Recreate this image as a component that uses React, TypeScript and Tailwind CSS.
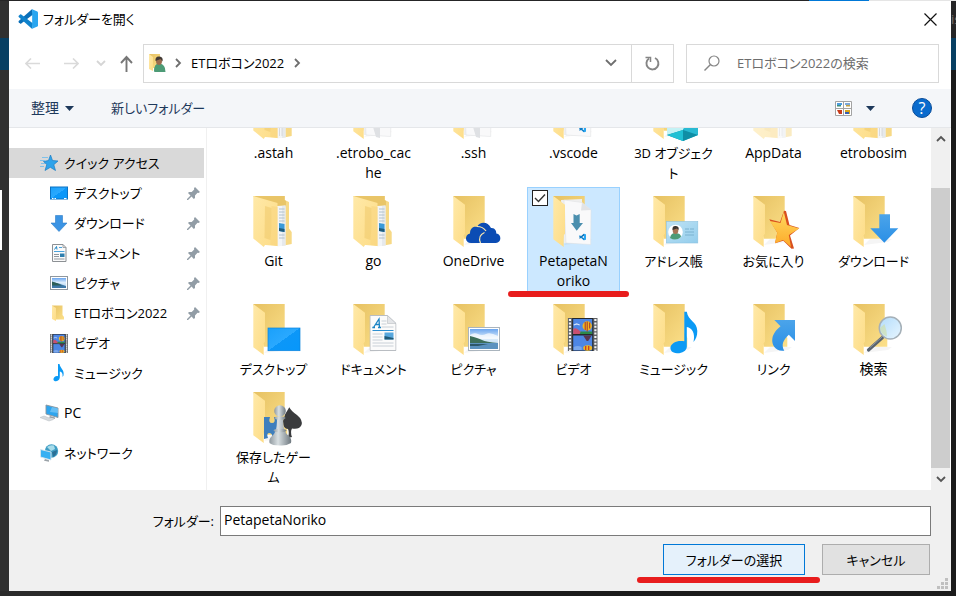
import { useState } from "react";
import type { ReactNode } from "react";

/* ---------- folder artwork (all drawn in a 55 x 56 box) ---------- */

function Gradients() {
  return (
    <svg className="absolute size-0" aria-hidden="true">
      <defs>
        <linearGradient id="back" x1="0" y1="0" x2="1" y2="1">
          <stop offset="0" stopColor="#e6c162" />
          <stop offset="1" stopColor="#fce08a" />
        </linearGradient>
        <linearGradient id="flap" x1="0" y1="0" x2="1" y2="1">
          <stop offset="0" stopColor="#ffe9a8" />
          <stop offset="1" stopColor="#fddc86" />
        </linearGradient>
        <linearGradient id="blue" x1="0" y1="0" x2="0" y2="1">
          <stop offset="0" stopColor="#4ba4ea" />
          <stop offset="1" stopColor="#2a8fe6" />
        </linearGradient>
        <linearGradient id="screen" x1="0" y1="0" x2="1" y2="1">
          <stop offset="0" stopColor="#1aa0fa" />
          <stop offset="0.5" stopColor="#2aa9ff" />
          <stop offset="0.5" stopColor="#0c97f8" />
          <stop offset="1" stopColor="#0797fb" />
        </linearGradient>
        <linearGradient id="star" x1="0" y1="0" x2="0" y2="1">
          <stop offset="0" stopColor="#ffd95f" />
          <stop offset="1" stopColor="#fda928" />
        </linearGradient>
        <linearGradient id="pawn" x1="0" y1="0" x2="1" y2="0">
          <stop offset="0" stopColor="#8f989e" />
          <stop offset="0.4" stopColor="#d9e0e3" />
          <stop offset="1" stopColor="#6e787f" />
        </linearGradient>
        <linearGradient id="sky" x1="0" y1="0" x2="0" y2="1">
          <stop offset="0" stopColor="#6aa5ef" />
          <stop offset="0.45" stopColor="#dcedfb" />
          <stop offset="1" stopColor="#b5d4ef" />
        </linearGradient>
        <linearGradient id="lens" x1="0" y1="0" x2="1" y2="1">
          <stop offset="0" stopColor="#b2dcfb" />
          <stop offset="1" stopColor="#e8f6ff" />
        </linearGradient>
        <linearGradient id="card" x1="0" y1="0" x2="1" y2="1">
          <stop offset="0" stopColor="#bfe3f5" />
          <stop offset="1" stopColor="#93cdec" />
        </linearGradient>
      </defs>
    </svg>
  );
}

const BackPanel = () => (
  <>
    <path d="M18 50 L24 44 H46 L42 47 Z" fill="#000" opacity="0.04" />
    <path d="M7.3 1 H38.7 V30 L41.3 35 V43.7 H17.7 Z" fill="url(#back)" />
  </>
);
const Flap = () => (
  <path d="M7.3 1 L19 9.7 V38.7 L17.7 40.3 V52 L7.3 44.3 Z" fill="url(#flap)" />
);

const FullFolder = ({ photo = true }: { photo?: boolean }) => (
  <>
    <path d="M7.3 1 H38.7 V5 L43 7 V33.5 L45.7 37 V49 L38 50.5 H30 Z" fill="#f7d986" />
    <path d="M7.3 1 H38.7 V5 L40 6 V12 H31 Z" fill="#e9c568" />
    <path d="M31 11 L39.5 10.5 V50.5 L31 51.5 Z" fill="#f3f5f7" />
    <path d="M36 11 L39.5 10.500 V50.500 L36 51 Z" fill="#e6e9ec" />
    {photo && (
      <>
        <path d="M33 14h5.500M33 17h5.500M33 20h5.500M33 23h5.500M33 26h5.500M33 40h5.500M33 43h5.500" stroke="#a9bccb" strokeWidth="0.900" />
        <path d="M33 28 L38.500 29 V37 L33 36 Z" fill="#3a9ad9" />
        <path d="M33 33 L38.500 34 V37 L33 36 Z" fill="#1e5b7c" />
      </>
    )}
    {!photo && <path d="M33.500 41v8M36 41v8" stroke="#d0d2d5" strokeWidth="0.800" />}
    <path d="M7.3 1 L31.5 8 V51 L19 50 L17.700 52 L7.300 43.500 Z" fill="url(#flap)" />
    <path d="M19 11 L25.500 13 V32 L24.500 45 L18.500 43 Z" fill="#f0cb70" opacity="0.600" />
    <path d="M25.500 11 L31.500 12 V51 L24.500 50 V34 Z" fill="#f8d680" opacity="0.600" />
  </>
);

const Photo = ({ x, y, w, h }: { x: number; y: number; w: number; h: number }) => (
  <svg x={x} y={y} width={w} height={h} viewBox="0 0 32 24" preserveAspectRatio="none">
    <rect x="0.5" y="0.5" width="31" height="23" fill="#fff" stroke="#aab4bd" />
    <rect x="2" y="2" width="28" height="20" fill="url(#sky)" />
    <path d="M2 8 q4 -3 8 -1 t8 0 t12 2 v3 H2 Z" fill="#fff" opacity="0.7" />
    <path d="M2 9 Q10 11 14 13 T30 16 V18 H2 Z" fill="#3d6f5a" />
    <path d="M2 16 H30 V22 H2 Z" fill="#5b92bf" />
    <path d="M2 17 H20 L10 19 H2 Z" fill="#2d586a" />
  </svg>
);

const Film = ({ x, y, w, h }: { x: number; y: number; w: number; h: number }) => (
  <svg x={x} y={y} width={w} height={h} viewBox="0 0 30 33" preserveAspectRatio="none">
    <rect width="30" height="33" fill="#5d6064" />
    <path d="M2.3 1V33M27.700 1V33" stroke="#f5f5f5" strokeWidth="2.200" strokeDasharray="2 1.400" />
    <rect x="4.500" width="21" height="33" fill="#26282b" />
    <rect x="5.5" y="1" width="19" height="15" fill="#4d86e4" />
    <rect x="5.5" y="17.5" width="19" height="15" fill="#4d86e4" />
    <path d="M5.5 11 Q8 9 11 12 T16 14 V16 H5.5 Z" fill="#c8506f" />
    <path d="M13 13.500 H24.5 V16 H12 Z" fill="#2d8a49" />
    <ellipse cx="19.500" cy="8" rx="4.700" ry="4.700" fill="#f2b71e" />
    <path d="M17.500 4v8M19.500 3.500v10M22 4.500v6" stroke="#a3322c" strokeWidth="1" />
    <path d="M15.500 17.5 H24 L20.5 23 H19 Z" fill="#5a3550" />
    <ellipse cx="20" cy="30" rx="4.500" ry="2.800" fill="#f2b71e" />
    <path d="M18 28v4M21 28v4" stroke="#c3322c" strokeWidth="1.200" />
    <path d="M6 29 q4 -2 8 0 v3 h-8 Z" fill="#7aa7ea" />
    <path d="M6 7l3 -1 3 1" stroke="#d7e6fb" strokeWidth="1.200" fill="none" />
  </svg>
);

const Page = ({ x, y, w, h }: { x: number; y: number; w: number; h: number }) => (
  <svg x={x} y={y} width={w} height={h} viewBox="0 0 27 36" preserveAspectRatio="none">
    <path d="M0.5 0.5 H18 L26.5 8.5 V35.5 H0.5 Z" fill="#fbfbfb" stroke="#b9bdc2" />
    <path d="M18 0.5 V8.5 H26.5 Z" fill="#e3e5e8" stroke="#b9bdc2" strokeWidth="0.6" />
    <path d="M4 12.5 L9.5 4 L10 12.5 M6 9.5 H10 M2.8 12.5 H5.5 M8.5 12.5 H11.5" stroke="#1c84c4" strokeWidth="1.3" fill="none" />
    <path d="M3 15.5 H24" stroke="#2d8fd0" strokeWidth="1.2" />
    <path d="M12 6h5M12 9h5M12 12h12M3 19h10M3 22h10M3 25h10M3 28h21M3 31h21" stroke="#c3cbd2" strokeWidth="0.9" />
    <rect x="15" y="17.5" width="9" height="7" fill="#58a7dd" />
    <path d="M15 21 L24 23 V24.5 H15 Z" fill="#1f5a78" />
  </svg>
);

const Person = () => (
  <>
    <circle cx="29.5" cy="37" r="7.3" fill="#fff" />
    <path d="M24 43 Q25 37.5 30 38 Q35 38.5 35 42 Q30 46.500 24 43Z" fill="#4d9b76" />
    <ellipse cx="29.500" cy="35.500" rx="2.800" ry="3.500" fill="#a87555" />
    <path d="M26.500 35 Q26 30.500 30 31 Q33.500 31.500 32.500 35 L31 33.500 Z" fill="#3b342f" />
  </>
);

const Code = ({ x, y, s }: { x: number; y: number; s: number }) => (
  <svg x={x} y={y} width={s} height={s} viewBox="0 0 24 24">
    <path d="M17 0 L0.800 14.500 Q0.300 15.200 0.900 15.900 L2.500 17.400 Q3.200 17.900 3.900 17.400 L18 6.500 Z" fill="#0a6fb8" />
    <path d="M17 24 L0.800 9.500 Q0.300 8.800 0.900 8.100 L2.500 6.600 Q3.200 6.100 3.900 6.600 L18 17.500 Z" fill="#0f82cc" />
    <path d="M17 0.200 L23.200 2.900 Q24 3.300 24 4.200 V19.800 Q24 20.700 23.200 21.100 L17 23.800 Z" fill="#2aa6f0" />
  </svg>
);

const Papers = ({ code = false, arrow = false }: { code?: boolean; arrow?: boolean }) => (
  <>
    <BackPanel />
    <path d="M15 5 L36 4 V48 H18 Z" fill="#efefef" />
    <path d="M18 5 L36 7.500 L45 15 L44.700 49.500 L20 48 Z" fill="#f9f9fa" stroke="#dcdee1" strokeWidth="0.500" />
    <path d="M36 7.500 L35 15.500 L45 15 Z" fill="#e1e3e6" />
    {!code && <path d="M27 40 L30 50 L34 51 V38 Z" fill="#dfe1e4" />}
    {arrow && <path d="M27.500 19 l3 1.500 3.200 -1.500 V28 H37 L30.700 35.800 L25 28 H27.500 Z" fill="#4b8fae" />}
    {code && <Code x={33} y={38.500} s={7} />}
    <Flap />
  </>
);

const NOTE = "M38.300 8.700 H40.800 C42 18 51 18 51.300 28 C51.300 33 50 36 47.500 39 C49.500 30 46 25 40.800 24 V44 C40.500 48 36 50.500 31 50.300 C26 50 24 47 24.500 44 C25.500 40 31 37 38.300 38.300 Z";

const art: Record<string, ReactNode> = {
  full: <FullFolder />,
  plain: <FullFolder photo={false} />,
  papers: <Papers />,
  code: <Papers code />,
  selected: <Papers code arrow />,
  cube: (
    <>
      <BackPanel />
      <Flap />
      <path d="M21 30 L37 24 L52 30 V48 L37 54 L21 48 Z" fill="#c4f2f5" />
      <path d="M37 42 L52 30 V48 L37 54 Z" fill="#28b9d2" />
      <path d="M21 48 L37 43 L52 48 L37 54 Z" fill="#0f8ea5" />
      <path d="M21 48 L37 43 V54 Z" fill="#20c0d4" />
    </>
  ),
  cloud: (
    <>
      <BackPanel />
      <Flap />
      <path d="M25 48 C19 48 18 40 24 38.500 C24 32 29 31 31 32 C34 26 42 26.500 45 33 C49 32.500 50.500 36 50.300 38.500 C56 39 55.500 48 50 48 Z" fill="#0b4cb4" />
      <path d="M31 31.500 Q37 31.500 40 36 M34.500 48 Q31.500 40.500 38.500 37.500" fill="none" stroke="#fbe7ae" strokeWidth="1.200" />
    </>
  ),
  contact: (
    <>
      <BackPanel />
      <Flap />
      <rect x="20.300" y="26.500" width="31.500" height="21.500" fill="url(#card)" stroke="#8dc2df" strokeWidth="0.600" />
      <Person />
      <path d="M39 34h4M44 34h4M39 37h9M39 40h9" stroke="#7bb2d0" strokeWidth="1" />
    </>
  ),
  star: (
    <>
      <BackPanel />
      <Flap />
      <path d="M38 15.700 L40 16 L43.500 30 L53.300 33 L44 40.500 L48 53.500 L45.500 53.700 L37.300 45.700 L29 48.300 L31.300 37.700 L23.300 24.300 L34 27 Z" fill="#d8501f" />
      <path d="M37.800 17 L41 30 L53.300 33.500 L42.800 40 L45 52 L37 45 L29 48.300 L31.300 37.700 L23.800 26 L34.500 28 Z" fill="url(#star)" />
    </>
  ),
  download: (
    <>
      <BackPanel />
      <Flap />
      <path d="M33.300 19.300 H44 V33.300 H52.300 L38.300 47.700 L24.300 33.300 H33.300 Z" fill="url(#blue)" />
    </>
  ),
  desktop: (
    <>
      <BackPanel />
      <Flap />
      <rect x="22" y="25" width="32" height="22.700" fill="url(#screen)" stroke="#0a83dd" strokeWidth="0.700" />
    </>
  ),
  document: (
    <>
      <BackPanel />
      <Flap />
      <Page x={23.500} y={12} w={27} h={36} />
    </>
  ),
  picture: (
    <>
      <BackPanel />
      <Flap />
      <Photo x={22} y={24} w={32} h={24} />
    </>
  ),
  video: (
    <>
      <BackPanel />
      <Flap />
      <Film x={21.700} y={15} w={30} h={33} />
    </>
  ),
  music: (
    <>
      <BackPanel />
      <Flap />
      <path d={NOTE} fill="#0b9af5" />
    </>
  ),
  link: (
    <>
      <BackPanel />
      <Flap />
      <path d="M28.300 17 H49 V38 L42.800 31.700 C37 37 35 42 38.300 47.700 C30 49 25.500 42 26.300 36 C27 30 31 26.500 34.500 23.300 Z" fill="url(#blue)" />
    </>
  ),
  search: (
    <>
      <BackPanel />
      <Flap />
      <path d="M36.500 34.500 L22.500 47" stroke="#59636e" strokeWidth="3.200" strokeLinecap="round" />
      <path d="M36 34 L24 44.500" stroke="#9aa5af" strokeWidth="0.800" />
      <circle cx="44.300" cy="25" r="11" fill="url(#lens)" stroke="#a5b0b8" strokeWidth="1.500" />
      <path d="M34 25 A10 10 0 0 0 41 33.500 Q41 28 38.500 21 Z" fill="#cfdfae" opacity="0.700" />
    </>
  ),
  games: (
    <>
      <BackPanel />
      <Flap />
      <path d="M18 26 H24 Q22 32 26 32 Q30 32 28 26 H34 V48 H26 Q27 42 23.500 42 Q20 42 22 47 L18 48 Z" fill="#3f7fbd" />
      <path d="M43.300 16.300 Q45 20 51 24 Q57 29 55.500 34 Q53 39 46 37.500 Q44 41 46 46 L42 47 Q43.500 41 42 38 Q37 38 37 30 Q39 22 43.300 16.300 Z" fill="#3a3b3d" />
      <path d="M31 27 H37 Q37 36 39 40 Q40 43 43 45 Q46 48 45 52 Q40 55 34 54.500 Q26 54.500 23.500 52 Q22.500 48 26 45 Q28.500 43 29.500 40 Q31 36 31 27 Z" fill="url(#pawn)" />
      <ellipse cx="34" cy="27" rx="5.500" ry="1.800" fill="url(#pawn)" />
      <ellipse cx="34" cy="39.500" rx="6.500" ry="1.800" fill="url(#pawn)" />
      <circle cx="34" cy="20" r="5.800" fill="url(#pawn)" />
    </>
  ),
};

/* ---------- data ---------- */

type Entry = { lines: string[]; icon: string; faded?: boolean };

const rows: Entry[][] = [
  [
    { lines: [".astah"], icon: "plain" },
    { lines: [".etrobo_cac", "he"], icon: "papers" },
    { lines: [".ssh"], icon: "papers" },
    { lines: [".vscode"], icon: "code" },
    { lines: ["3D オブジェク", "ト"], icon: "cube" },
    { lines: ["AppData"], icon: "plain", faded: true },
    { lines: ["etrobosim"], icon: "plain" },
  ],
  [
    { lines: ["Git"], icon: "full" },
    { lines: ["go"], icon: "full" },
    { lines: ["OneDrive"], icon: "cloud" },
    { lines: ["PetapetaN", "oriko"], icon: "selected" },
    { lines: ["アドレス帳"], icon: "contact" },
    { lines: ["お気に入り"], icon: "star" },
    { lines: ["ダウンロード"], icon: "download" },
  ],
  [
    { lines: ["デスクトップ"], icon: "desktop" },
    { lines: ["ドキュメント"], icon: "document" },
    { lines: ["ピクチャ"], icon: "picture" },
    { lines: ["ビデオ"], icon: "video" },
    { lines: ["ミュージック"], icon: "music" },
    { lines: ["リンク"], icon: "link" },
    { lines: ["検索"], icon: "search" },
  ],
  [{ lines: ["保存したゲー", "ム"], icon: "games" }],
];

/* Kana set a size smaller than Latin or kanji-only names, for an even colour. */
const hasKana = (text: string) => /[\u3040-\u30ff]/.test(text);

const sideArt: Record<string, ReactNode> = {
  quick: (
    <>
      <path d="M10.500 1 L12.500 6.500 L18 7 L13.800 10.700 L15.500 16.500 L10.300 13.300 L5 16.500 L6.800 10.500 L3.500 7.500 L8.500 6.500 Z" fill="#2ea3ea" stroke="#1a7dc4" strokeWidth="0.700" />
      <path d="M2 3.500h6M0 6.500h5M1 9.500h4M0 12.500h4" stroke="#7fc1ea" strokeWidth="1" />
    </>
  ),
  desktop: (
    <>
      <rect x="0.500" y="3" width="17" height="12" fill="url(#screen)" stroke="#0a72c4" />
      <path d="M2 14.500h1.500M4.500 14.500h1.500M14 14.500h2.500" stroke="#fff" />
    </>
  ),
  download: <path d="M5.500 1.500 H12.500 V9 H17 L9 17.500 L1 9 H5.500 Z" fill="#3b94e4" stroke="#2b7cc8" strokeWidth="0.600" />,
  document: (
    <>
      <path d="M2.500 0.500 H13 L16 3.500 V17.500 H2.500 Z" fill="#fafafa" stroke="#8c9094" />
      <path d="M13 0.500 V3.500 H16" fill="none" stroke="#8c9094" strokeWidth="0.800" />
      <path d="M4.500 5.500 L6.500 2.500 L7 5.500" fill="none" stroke="#1c84c4" />
      <path d="M9 3.500h3M4 7.500h10.500" stroke="#4aa3dc" />
      <path d="M4 10.500h5M4 12.500h5M4 15h10.500" stroke="#8f979e" />
      <path d="M10 9.500h4.500v3.500h-4.500z" fill="#2f7fae" />
    </>
  ),
  picture: (
    <>
      <rect x="0.500" y="2.500" width="17" height="13" fill="#fff" stroke="#8f979e" />
      <rect x="2" y="4" width="14" height="10" fill="url(#sky)" />
      <path d="M2 8 Q8 9 16 12 V14 H2 Z" fill="#3f79a8" />
      <path d="M2 7.500 Q8 9 12 11.500 H2 Z" fill="#2d5f57" />
    </>
  ),
  folder: (
    <>
      <path d="M2 1.500 H12.500 V11 L14 13 V15.500 H6 Z" fill="url(#back)" />
      <path d="M2 1.500 L6 4 V17 L2 15 Z" fill="url(#flap)" />
    </>
  ),
  video: <Film x={0} y={0} w={18} h={19} />,
  music: <path d="M8 0 H9.500 C10.500 5 14.500 5.500 13.500 11.500 L12.500 13 C13 9.500 12 8 9.800 7.500 V13.500 C9.500 16.500 7 17.500 5 17.200 C3 16.800 3 14.500 4.500 13 C5.500 12 7 11.900 8 12.200 Z" fill="#0b9af5" />,
  pc: (
    <>
      <path d="M6 1 L18 4 V13.500 L6 10 Z" fill="#2fa5ee" stroke="#8a949c" strokeWidth="0.900" />
      <path d="M12 3 L18 4.500 V9 L10 8 Z" fill="#7dcaf8" opacity="0.700" />
      <path d="M10 12 l5 1.500 v1.500 l-6 -1.500 Z" fill="#9aa2a8" />
      <path d="M0 13.500 L4 12 L13.500 15.500 L9 17 Z" fill="#d6dadd" stroke="#b7bdc2" strokeWidth="0.500" />
    </>
  ),
  network: (
    <>
      <circle cx="11.500" cy="7" r="6.700" fill="#3f9dc4" />
      <path d="M7 3 Q10 0.500 14 1.500 L15 5 L11 7 Z" fill="#a8dcea" />
      <path d="M12 8 L17 6 Q17 11 13 13 Z" fill="#2a6f96" />
      <path d="M0.500 5.500 L11 8 V16 L0.500 13 Z" fill="#38b0f2" stroke="#dbe6ec" strokeWidth="0.900" />
      <path d="M5 15 l4 1.200 v1.500 l-5 -1 Z" fill="#9aa2a8" />
    </>
  ),
};

type Place = { label: string; icon: string; pinned?: boolean };

const places: Place[] = [
  { label: "デスクトップ", icon: "desktop", pinned: true },
  { label: "ダウンロード", icon: "download", pinned: true },
  { label: "ドキュメント", icon: "document", pinned: true },
  { label: "ピクチャ", icon: "picture", pinned: true },
  { label: "ETロボコン2022", icon: "folder", pinned: true },
  { label: "ビデオ", icon: "video" },
  { label: "ミュージック", icon: "music" },
];

/* ---------- pieces ---------- */

const SideIcon = ({ name }: { name: string }) => (
  <svg width="18" height="19" viewBox="0 0 18 19" className="shrink-0 overflow-visible" aria-hidden="true">
    {sideArt[name]}
  </svg>
);

const Pin = () => (
  <svg width="13" height="13" viewBox="0 0 13 13" className="mr-1 ml-auto" aria-hidden="true">
    <path d="M8 0 L13 5 L11.500 6 L10.500 5.800 L8 8.500 L8 11 L6.800 12 L4.500 9.500 L1 13 H0 V12 L3.500 8.500 L1 6 L2 5 L4.700 5 L7.200 2.500 L7 1.200 Z" fill="#929da6" />
  </svg>
);

const Chevron = ({ dir, color = "#6e6e6e" }: { dir: "right" | "down" | "up"; color?: string }) => (
  <svg width="10" height="10" viewBox="0 0 10 10" aria-hidden="true">
    <path
      d={dir === "right" ? "M3 1 L7 5 L3 9" : dir === "down" ? "M1 3 L5 7 L9 3" : "M1 7 L5 3 L9 7"}
      fill="none"
      stroke={color}
      strokeWidth="1.800"
    />
  </svg>
);

const Caret = () => (
  <svg width="9" height="5" viewBox="0 0 9 5" aria-hidden="true">
    <path d="M0 0 H9 L4.500 5 Z" fill="#1e395b" />
  </svg>
);

function FileItem({ entry }: { entry: Entry }) {
  const isTarget = entry.icon === "selected";
  const [checked, setChecked] = useState(true);
  const name = entry.lines.join("");
  return (
    <li className={isTarget ? "relative border border-[#99d1ff] bg-[#cce8ff]" : "border border-transparent"}>
      <button type="button" aria-label={name} className="flex w-full flex-col items-center pt-[7px]">
        <svg
          width="55"
          height="56"
          viewBox="0 0 55 56"
          aria-hidden="true"
          className={entry.faded ? "overflow-visible opacity-50" : "overflow-visible"}
        >
          {art[entry.icon]}
        </svg>
        {entry.lines.map((line) => (
          <span
            key={line}
            className={
              hasKana(line)
                ? "block text-[13px] leading-5 whitespace-nowrap"
                : "block text-[14px] leading-5 whitespace-nowrap"
            }
          >
            {line}
          </span>
        ))}
      </button>
      {isTarget && (
        <>
          <input
            type="checkbox"
            aria-label={name}
            checked={checked}
            onChange={() => setChecked(!checked)}
            className="absolute top-0.5 left-1 size-4 appearance-none border border-[#222] bg-white"
          />
          {checked && (
            <svg width="16" height="16" viewBox="0 0 16 16" className="pointer-events-none absolute top-0.5 left-1" aria-hidden="true">
              <path d="M3 8 L6.500 11.500 L13 4.500" fill="none" stroke="#333" strokeWidth="1.400" />
            </svg>
          )}
          <span className="absolute -bottom-1.5 -left-5 h-[6px] w-[121px] rounded-full bg-[#e81c1c]" />
        </>
      )}
    </li>
  );
}

export default function App() {
  const [folder, setFolder] = useState("PetapetaNoriko");
  const [query, setQuery] = useState("");

  return (
    <div
      lang="ja"
      className="flex h-screen flex-col overflow-hidden bg-[#1e1e1e] font-['Open_Sans','Noto_Sans_CJK_JP',sans-serif] text-[13px] leading-5 text-black [font-feature-settings:'palt']"
    >
      <Gradients />
      <div className="flex h-px shrink-0 justify-end bg-[#252526]">
        <div className="w-[60px] bg-[#0078d7]" />
        <div className="w-[87px] bg-[#e5e5e5]" />
      </div>

      <div className="flex min-h-0 flex-1">
        <div className="flex w-[9px] shrink-0 flex-col bg-[#303030]">
          <div className="mt-[37px] h-8 bg-[#073f63]" />
          <div className="mt-[120px] h-[60px] w-0.5 bg-white" />
        </div>

        <main className="flex min-w-0 flex-1 flex-col bg-white">
          <header className="flex h-9 shrink-0 items-center pr-[14px] pl-[9px]">
            <svg width="20" height="20" viewBox="0 0 20 20" aria-hidden="true">
              <Code x={0} y={0} s={20} />
            </svg>
            <h1 className="ml-[5px]">フォルダーを開く</h1>
            <button type="button" aria-label="閉じる" className="ml-auto">
              <svg width="13" height="13" viewBox="0 0 13 13" aria-hidden="true">
                <path d="M0.500 0.500 L12.500 12.500 M12.500 0.500 L0.500 12.500" stroke="#111" strokeWidth="1.200" />
              </svg>
            </button>
          </header>

          <nav className="flex h-[52px] shrink-0 items-center pr-3">
            <div className="flex w-[134px] shrink-0 items-center pl-4">
              <button type="button" aria-label="戻る">
                <svg width="15" height="11" viewBox="0 0 15 11" aria-hidden="true">
                  <path d="M15 5.500 H1 M6 0.500 L1 5.500 L6 10.500" fill="none" stroke="#dadada" strokeWidth="1.600" />
                </svg>
              </button>
              <button type="button" aria-label="進む" className="ml-6">
                <svg width="15" height="11" viewBox="0 0 15 11" aria-hidden="true">
                  <path d="M0 5.500 H14 M9 0.500 L14 5.500 L9 10.500" fill="none" stroke="#dadada" strokeWidth="1.600" />
                </svg>
              </button>
              <button type="button" aria-label="最近表示した場所" className="ml-[17px]">
                <Chevron dir="down" color="#d5d5d5" />
              </button>
              <button type="button" aria-label="上へ" className="ml-[14px]">
                <svg width="13" height="17" viewBox="0 0 13 17" aria-hidden="true">
                  <path d="M6.500 17 V2 M1 8 L6.500 2 L12 8" fill="none" stroke="#777" strokeWidth="1.900" />
                </svg>
              </button>
            </div>
            <div className="flex h-[39px] min-w-0 flex-1 border border-[#d9d9d9]">
              <div className="flex min-w-0 flex-1 items-center pr-[14px] pl-[5px]">
                <svg width="17" height="18" viewBox="0 0 17 18" aria-hidden="true">
                  <path d="M0 0 H11 V14 H4 Z" fill="url(#back)" />
                  <path d="M0 0 L4 3 V17 L0 15 Z" fill="url(#flap)" />
                  <path d="M5 17 Q5 9 10.500 9.500 Q16.500 10 16.500 18 H5.500 Z" fill="#4d9b76" />
                  <ellipse cx="10" cy="7" rx="3" ry="4" fill="#9c6b4e" />
                  <path d="M6.500 7 Q6 2 10.500 2.500 Q14.500 3 13.500 7.500 L11.500 5 Z" fill="#423a34" />
                </svg>
                <span className="ml-[7px]">
                  <Chevron dir="right" />
                </span>
                <button type="button" className="mx-2">
                  ETロボコン2022
                </button>
                <Chevron dir="right" />
                <button type="button" aria-label="以前の場所" className="ml-auto">
                  <svg width="12" height="8" viewBox="0 0 12 8" aria-hidden="true">
                    <path d="M1 1 L6 6 L11 1" fill="none" stroke="#6e6e6e" strokeWidth="1.800" />
                  </svg>
                </button>
              </div>
              <button type="button" aria-label="最新の情報に更新" className="flex w-[42px] items-center justify-center border-l border-[#d9d9d9]">
                <svg width="15" height="15" viewBox="0 0 15 15" aria-hidden="true">
                  <path d="M10 2 A6 6 0 1 1 4 2.500" fill="none" stroke="#858585" strokeWidth="1.900" />
                  <path d="M0.500 1.500 H5.500 V6" fill="none" stroke="#858585" strokeWidth="1.500" />
                </svg>
              </button>
            </div>
            <label className="ml-3 flex h-[39px] w-[253px] shrink-0 items-center border border-[#d9d9d9] pl-[17px]">
              <svg width="16" height="16" viewBox="0 0 16 16" aria-hidden="true">
                <circle cx="10" cy="6" r="5" fill="none" stroke="#858585" strokeWidth="1.200" />
                <path d="M6.500 9.500 L0.500 15.500" stroke="#858585" strokeWidth="1.400" />
              </svg>
              <input
                type="search"
                aria-label="検索"
                value={query}
                onChange={(e) => setQuery(e.target.value)}
                placeholder="ETロボコン2022の検索"
                className="ml-[17px] min-w-0 flex-1 outline-none placeholder:text-[#6d6d6d]"
              />
            </label>
          </nav>

          <div className="flex h-[39px] shrink-0 items-center border-b border-[#e5e7ea] bg-[#f4f6f9] pr-[19px] pl-[22px] text-[#1e395b]">
            <button type="button" className="flex w-20 items-center gap-[6px] text-[14px]">
              整理 <Caret />
            </button>
            <button type="button">新しいフォルダー</button>
            <button type="button" aria-label="表示の変更" className="ml-auto flex items-center gap-[14px]">
              <svg width="17" height="15" viewBox="0 0 17 15" aria-hidden="true">
                <path d="M0.500 0.500 H16.500 V14.500 H0.500 Z M8.500 0 V15 M0 7.500 H17" fill="#fff" stroke="#a3a3a3" />
                <path d="M2 2h5v2H2z" fill="#4b9be0" />
                <path d="M2 4h4v1.500H2z" fill="#3c8f7c" />
                <path d="M10 2h5v2h-5z" fill="#7da9da" />
                <path d="M11 4h4v1.500h-4z" fill="#c5a040" />
                <path d="M2 9h5v4H4z" fill="#c73c1c" />
                <path d="M10 9h5v4h-5z" fill="#d9a51c" />
                <path d="M10 11h4v2h-4z" fill="#365eaf" />
              </svg>
              <Caret />
            </button>
            <button type="button" aria-label="ヘルプ" className="ml-[37px] flex size-5 items-center justify-center rounded-full border border-[#084c99] bg-[#0a6bcd] text-[16px] text-white">
              ?
            </button>
          </div>

          <div className="flex min-h-0 flex-1">
            <aside className="flex w-[198px] shrink-0 flex-col border-r border-[#f0f0f0] pt-5">
              <button type="button" className="mr-0.5 flex h-[30px] items-center gap-[6px] bg-[#d9d9d9] pl-[31px]">
                <SideIcon name="quick" />
                クイック アクセス
              </button>
              {places.map((p) => (
                <button key={p.label} type="button" className="mr-0.5 flex h-[30px] items-center gap-[6px] pl-[41px]">
                  <SideIcon name={p.icon} />
                  {p.label}
                  {p.pinned && <Pin />}
                </button>
              ))}
              <button type="button" className="mt-[10px] flex h-[30px] items-center gap-[6px] pl-[31px] text-[14px]">
                <SideIcon name="pc" />
                PC
              </button>
              <button type="button" className="mt-[10px] flex h-[30px] items-center gap-[6px] pl-[31px]">
                <SideIcon name="network" />
                ネットワーク
              </button>
            </aside>

            <section className="flex min-w-0 flex-1 flex-col justify-end gap-[3px] overflow-hidden pb-0.5 pl-5" aria-label="ファイル">
              {rows.map((row, i) => (
                <ul key={i} className="grid shrink-0 grid-cols-[repeat(7,93px)] gap-x-[7px]">
                  {row.map((entry) => (
                    <FileItem key={entry.lines[0]} entry={entry} />
                  ))}
                </ul>
              ))}
            </section>

            <div className="mr-px flex w-[19px] shrink-0 flex-col bg-[#f0f0f0]">
              <button type="button" aria-label="上へスクロール" className="flex h-[22px] items-center justify-center">
                <Chevron dir="up" color="#555" />
              </button>
              <div className="mt-[38px] flex-1 bg-[#cdcdcd]" />
              <button type="button" aria-label="下へスクロール" className="flex h-[22px] items-center justify-center">
                <Chevron dir="down" color="#555" />
              </button>
            </div>
          </div>

          <footer className="relative shrink-0 bg-[#f0f0f0] pt-4 pr-5 pb-4">
            <div className="flex items-center">
              <label htmlFor="folder" className="w-[211px] shrink-0 pr-[6px] text-right">
                フォルダー:
              </label>
              <input
                id="folder"
                value={folder}
                onChange={(e) => setFolder(e.target.value)}
                className="h-[30px] min-w-0 flex-1 border border-[#7a7a7a] bg-white px-[3px] pb-1 text-[14px] outline-none"
              />
            </div>
            <div className="mt-2 flex justify-end gap-[17px] pr-px">
              <div className="relative">
                <button type="button" className="h-[31px] w-[142px] border border-[#0078d7] bg-[#e5f1fb]">
                  フォルダーの選択
                </button>
                <span className="absolute top-[33px] -left-[26px] h-[6px] w-[183px] rounded-full bg-[#e81c1c]" />
              </div>
              <button type="button" className="h-[31px] w-[108px] border border-[#adadad] bg-[#e1e1e1]">
                キャンセル
              </button>
            </div>
            <svg width="11" height="11" viewBox="0 0 11 11" className="absolute right-[3px] bottom-0.5" aria-hidden="true">
              <path d="M8 0h3v3H8zM4 4h3v3H4zM8 4h3v3H8zM0 8h3v3H0zM4 8h3v3H4zM8 8h3v3H8z" fill="#bfbfbf" />
            </svg>
          </footer>
        </main>

        <div className="w-[5px] shrink-0 overflow-hidden bg-[#1b1b1b]">
          <div className="h-[37px] bg-[#252526] pt-2 text-[#77706a]">is</div>
          <div className="h-8 bg-[#073f63]" />
        </div>
      </div>

      <div className="flex h-[5px] shrink-0 bg-[#1b1b1b]">
        <div className="w-[60px] bg-[#2b2b2b]" />
      </div>
    </div>
  );
}
